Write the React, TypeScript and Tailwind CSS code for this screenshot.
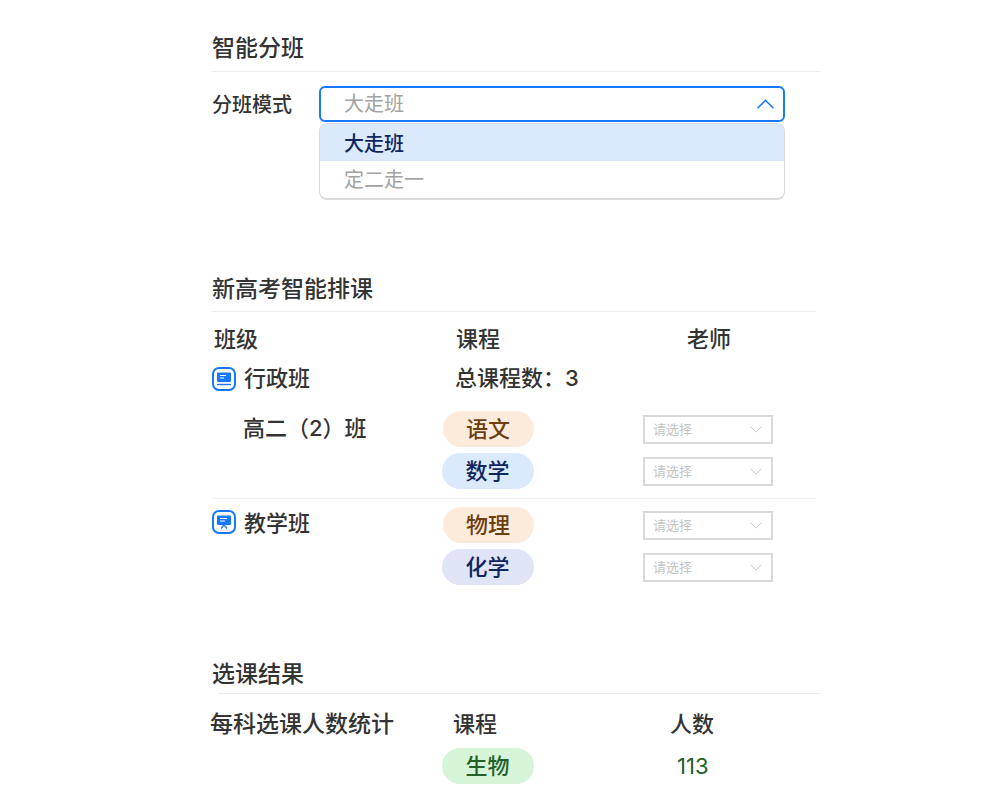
import React from 'react';

const FONT = "font-['Inter','Noto_Sans_CJK_SC',sans-serif]";

function Chevron({ up, className }: { up?: boolean; className: string }) {
  return (
    <svg viewBox="0 0 16 9" fill="none" stroke="currentColor" className={className}>
      <path d={up ? 'M0.5 8.5 L8 1 L15.5 8.5' : 'M0.5 0.5 L8 8 L15.5 0.5'} strokeWidth={up ? 1.5 : 1.3} />
    </svg>
  );
}

function Pill({ label, bg, color, wide }: { label: string; bg: string; color: string; wide?: boolean }) {
  return (
    <div className={`flex h-9 items-center justify-center rounded-full pr-px text-[22px] font-medium ${wide ? 'w-[92px]' : 'ml-px w-[91px]'} ${bg} ${color}`}>
      {label}
    </div>
  );
}

function TeacherSelect() {
  return (
    <div className="flex h-[29px] w-[130px] items-center justify-between border-2 border-[#d9d9d9] bg-white pl-2 pr-[9px] text-[13px] text-[#c4c4c4]">
      <span className="pt-px">请选择</span>
      <Chevron className="h-[7px] w-[12px] text-[#c4c4c4]" />
    </div>
  );
}

function CourseRow({ label, bg, color, wide }: { label: string; bg: string; color: string; wide?: boolean }) {
  return (
    <div className="flex h-9 items-center">
      <div className="w-[201px]">
        <Pill label={label} bg={bg} color={color} wide={wide} />
      </div>
      <TeacherSelect />
    </div>
  );
}

function LecternIcon({ board }: { board?: boolean }) {
  return (
    <div className="flex h-6 w-6 shrink-0 items-center justify-center rounded-[7px] border-[2.5px] border-[#1677ff] bg-white">
      {board ? (
        <svg viewBox="0 0 14 14" className="h-[14px] w-[14px]">
          <rect x="0" y="0.5" width="14" height="9.5" rx="1" fill="#1677ff" />
          <path d="M3 3.5 H10 M3 6 H8" stroke="#fff" strokeWidth="1" />
          <path d="M7 10 V11 M6.5 10.5 L4 13.5 M7.5 10.5 L10 13.5" stroke="#1677ff" strokeWidth="1.2" />
        </svg>
      ) : (
        <svg viewBox="0 0 14 14" className="h-[14px] w-[14px]">
          <rect x="0" y="0.5" width="14" height="9.5" rx="1" fill="#1677ff" />
          <path d="M3 3.5 H9 M3 6 H7" stroke="#fff" strokeWidth="1" />
          <path d="M0 12.5 H14" stroke="#1677ff" strokeWidth="1.4" />
        </svg>
      )}
    </div>
  );
}

export default function App() {
  return (
    <div className={`min-h-[800px] w-[1000px] overflow-hidden bg-white pl-[212px] text-[#333333] ${FONT}`}>
      <div className="w-[608px]">
        <div className="flex h-[72px] items-end border-b border-[#ebebeb] pb-[7px] text-[23px] font-medium leading-[32px]">智能分班</div>

        <div className="mt-[14px] flex">
          <div className="w-[107px] pt-[3px] text-xl font-medium leading-[32px]">分班模式</div>
          <div className="w-[466px]">
            <div className="flex h-9 items-center justify-between rounded-[6px] border-2 border-[#1677ff] bg-white pl-[23px] pr-[9px] text-xl text-[#a3a3a3]">
              <span>大走班</span>
              <Chevron up className="h-[10px] w-[17px] text-[#1677ff]" />
            </div>
            <div className="mt-px h-[77px] overflow-hidden rounded-[8px] border border-b-2 border-[#d9d9d9] text-xl">
              <div className="flex h-[37px] items-center bg-[#dbe9fd] pl-[24px] pt-[2px] font-medium text-[#10265f]">大走班</div>
              <div className="flex h-[37px] items-center pl-[24px] text-[#a3a3a3]">定二走一</div>
            </div>
          </div>
        </div>

        <div className="mt-[68px] flex h-[44px] w-[604px] items-end border-b border-[#ebebeb] pb-[6px] text-[23px] font-medium leading-[32px]">新高考智能排课</div>

        <div className="mt-[13px] flex h-[30px] items-center pb-[2px] text-[22px] font-medium">
          <span className="ml-[2px] w-[242px]">班级</span>
          <span className="w-[230px]">课程</span>
          <span className="ml-px">老师</span>
        </div>

        <div className="mt-[9px] flex h-[30px] items-center text-[22px] font-medium">
          <LecternIcon />
          <span className="mb-[2px] ml-2 w-[211px]">行政班</span>
          <span className="mb-[2px]">总课程数：3</span>
        </div>

        <div className="mt-[17px] flex w-[604px] border-b border-[#f0f0f0] pb-[9px]">
          <div className="ml-[31px] w-[199px] pt-px text-[22px] font-medium leading-[32px]">高二（2）班</div>
          <div className="flex flex-col gap-[6px]">
            <CourseRow label="语文" bg="bg-[#fcebdb]" color="text-[#6b3f10]" />
            <CourseRow label="数学" bg="bg-[#dbe9fd]" color="text-[#10265f]" wide />
          </div>
        </div>

        <div className="mt-2 flex">
          <div className="flex w-[230px] items-start pt-[3px]">
            <LecternIcon board />
            <span className="-mt-[2px] ml-2 text-[22px] font-medium leading-[30px]">教学班</span>
          </div>
          <div className="flex flex-col gap-[6px]">
            <CourseRow label="物理" bg="bg-[#fcebdb]" color="text-[#6b3f10]" />
            <CourseRow label="化学" bg="bg-[#e0e4f7]" color="text-[#10265f]" wide />
          </div>
        </div>

        <div className="ml-[6px] mt-[72px] flex h-[37px] items-end border-b border-[#ebebeb] text-[23px] font-medium leading-[32px]">
          <span className="-ml-[6px] mb-[3px]">选课结果</span>
        </div>

        <div className="mt-[15px] flex h-[30px] items-center text-[22px] font-medium">
          <span className="-ml-[2px] w-[243px] text-[23px]">每科选课人数统计</span>
          <span className="w-[217px]">课程</span>
          <span>人数</span>
        </div>

        <div className="mt-[9px] flex items-center">
          <div className="ml-[230px] w-[235px]">
            <Pill label="生物" bg="bg-[#d6f4d8]" color="text-[#24602a]" wide />
          </div>
          <span className="text-[22px] text-[#24602a]">113</span>
        </div>
      </div>
    </div>
  );
}
